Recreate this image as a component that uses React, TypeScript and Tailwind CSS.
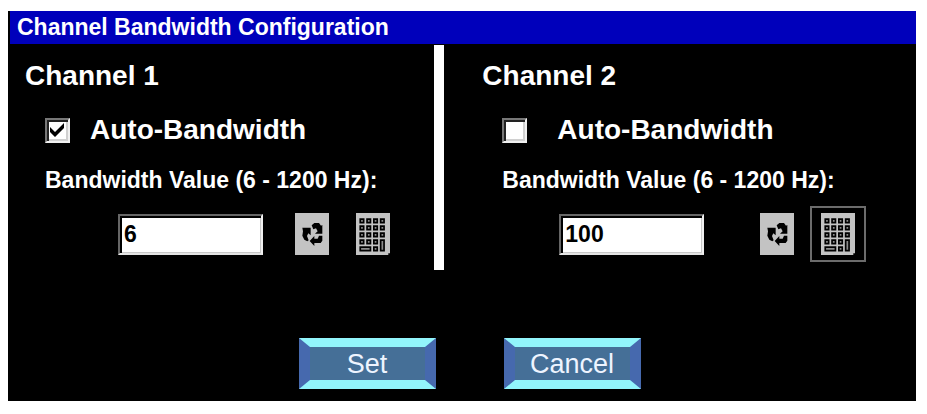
import { useState } from 'react'

interface Channel {
  id: number
  auto: boolean
  value: string
}

const CHANNELS: Channel[] = [
  { id: 1, auto: true, value: '6' },
  { id: 2, auto: false, value: '100' },
]

const KEYS = [
  [2, 3], [6, 3], [10, 3], [14, 3],
  [2, 7], [6, 7], [10, 7], [14, 7],
  [2, 11], [6, 11], [10, 11], [14, 11],
  [2, 15], [6, 15], [10, 15],
  [10, 19],
]

function CycleIcon() {
  return (
    <svg viewBox="0 0 102 126" className="h-[42px] w-[34px]" aria-hidden="true">
      <rect width="102" height="126" fill="#c3c3c3" />
      <g fill="#000">
        <path d="M50 37l8-7h14l6 8 4-2v26H60l8-7-5-9-8 3z" />
        <path d="M22 44h25v23l-7-6-4 8 5 13-4 3-9-5-6-12 2-13z" />
        <path d="M44 84l14-15v8h10l4-9h10v15l-5 7H58v9z" />
      </g>
    </svg>
  )
}

function KeypadIcon() {
  return (
    <svg viewBox="0 0 20 24" className="h-[42px] w-[34px]" preserveAspectRatio="none" aria-hidden="true">
      <path d="M0 0h20v23h-1v1H0z" fill="#c3c3c3" />
      <g fill="#8c8c8c" stroke="#000">
        {KEYS.map(([x, y]) => (
          <rect key={`${x}-${y}`} x={x + 0.5} y={y + 0.5} width="2" height="2" />
        ))}
        <rect x="2.5" y="19.5" width="6" height="2" />
        <rect x="14.5" y="15.5" width="2" height="6" />
      </g>
    </svg>
  )
}

function ChannelPanel({ channel, className }: { channel: Channel; className: string }) {
  const [auto, setAuto] = useState(channel.auto)
  const [value, setValue] = useState(channel.value)
  const second = channel.id === 2

  return (
    <section className={`pt-4 pb-2 ${className}`}>
      <h2 className="text-[28px] leading-8 font-bold">Channel {channel.id}</h2>

      <div className="pl-5">
        <label className={`mt-[22px] flex items-center ${second ? 'gap-[30px]' : 'gap-5'}`}>
          <span className="grid shrink-0">
            <input
              type="checkbox"
              checked={auto}
              onChange={e => setAuto(e.target.checked)}
              className="peer col-start-1 row-start-1 size-[25px] appearance-none border-2 border-t-[#777] border-r-[#f0f0f0] border-b-[#f0f0f0] border-l-[#777] bg-white shadow-[inset_2px_2px_#222,inset_-2px_-2px_#d0d0d0]"
            />
            <svg
              viewBox="0 0 25 25"
              className="pointer-events-none invisible col-start-1 row-start-1 size-[25px] peer-checked:visible"
              aria-hidden="true"
            >
              <path d="M5 9l5 5 9-9v5l-9 9-5-5z" fill="#000" />
            </svg>
          </span>
          <span className="text-[28px] leading-8 font-bold">Auto-Bandwidth</span>
        </label>

        <label htmlFor={`bandwidth-${channel.id}`} className="mt-5 block text-[23px] leading-7 font-bold whitespace-nowrap">
          Bandwidth Value (6 - 1200 Hz):
        </label>
      </div>

      <div className={`mt-3 flex items-center ${second ? 'pl-[77px]' : 'pl-[93px]'}`}>
        <input
          id={`bandwidth-${channel.id}`}
          type="text"
          value={value}
          onChange={e => setValue(e.target.value)}
          className={`h-[41px] w-[145px] border-2 border-t-[#666] border-r-[#f0f0f0] border-b-[#e4e4e4] border-l-[#666] bg-white pl-1 text-[23px] font-bold text-black shadow-[inset_2px_2px_#000,inset_-1px_-1px_#c8c8c8] outline-none ${second ? 'mr-14' : 'mr-8'}`}
        />
        <button type="button" aria-label="Next value" className="shrink-0">
          <CycleIcon />
        </button>
        <button
          type="button"
          aria-label="Open keypad"
          className={`ml-4 flex size-14 shrink-0 items-center justify-center border-2 ${second ? 'border-[#6c6c6c]' : 'border-transparent'}`}
        >
          <KeypadIcon />
        </button>
      </div>
    </section>
  )
}

function BevelButton({ children }: { children: string }) {
  return (
    <button
      type="button"
      className="flex h-[51px] w-[137px] items-center justify-center border-x-[11px] border-y-[9px] border-x-[#4669ae] border-y-[#92f5fb] bg-[#456f97] text-[27px] leading-8 text-[#eef4ff]"
    >
      {children}
    </button>
  )
}

export default function App() {
  return (
    <div className="min-h-screen bg-white pt-[11px] pr-[11px] pb-3 pl-2 font-['Liberation_Sans',Arial,sans-serif]">
      <main className="bg-black pb-3 text-white">
        <h1 className="ml-0.5 bg-[#0000bb] pl-[7px] text-[23px] leading-[33px] font-bold">
          Channel Bandwidth Configuration
        </h1>

        <div className="grid grid-cols-[47fr_10px_52fr]">
          <ChannelPanel channel={CHANNELS[0]} className="pl-[17px]" />
          <div className="mt-px bg-white" />
          <ChannelPanel channel={CHANNELS[1]} className="pl-[38px]" />
        </div>

        <div className="mt-[68px] flex gap-[68px] pl-[32%]">
          <BevelButton>Set</BevelButton>
          <BevelButton>Cancel</BevelButton>
        </div>
      </main>
    </div>
  )
}
